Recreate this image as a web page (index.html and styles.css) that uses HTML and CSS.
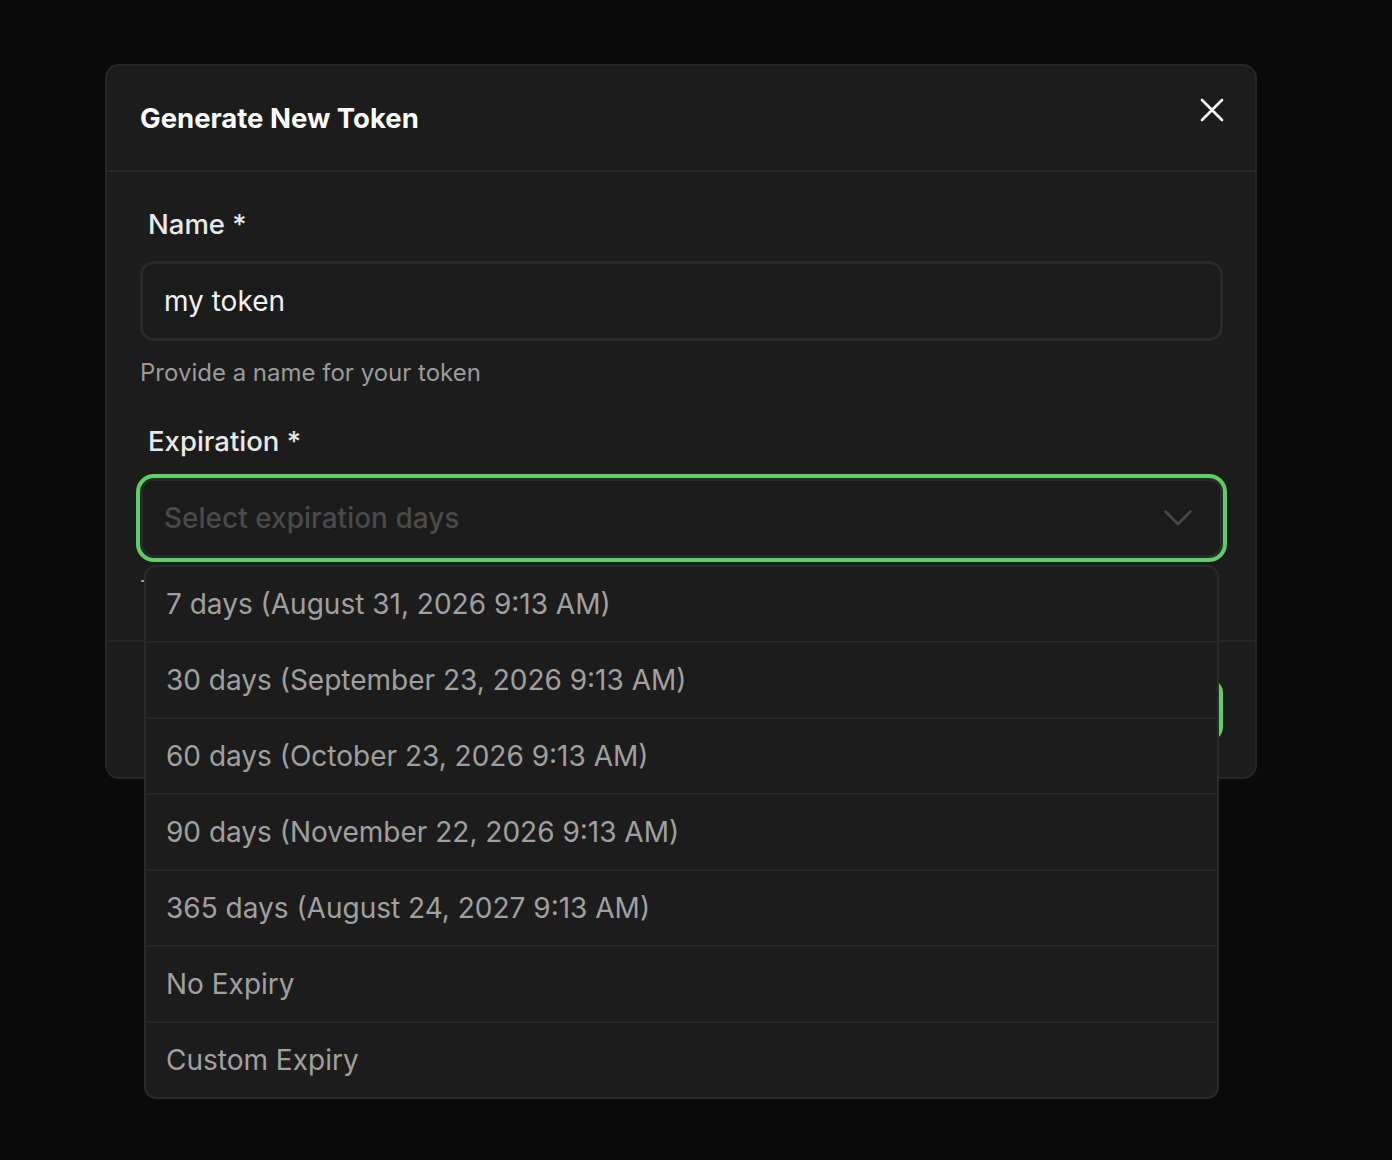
FILE: index.html
```html
<!DOCTYPE html>
<html lang="en">
<head>
<meta charset="utf-8">
<title>Generate New Token</title>
<link rel="stylesheet" href="styles.css">
</head>
<body>
<div class="page">
  <div class="modal">
    <div class="modal-header">
      <h2 class="modal-title">Generate New Token</h2>
      <button class="close-btn" aria-label="Close">
        <svg width="24" height="24" viewBox="0 0 24 24" fill="none" stroke="#ffffff" stroke-width="2.6" stroke-linecap="round"><path d="M2 2L22 22M22 2L2 22"/></svg>
      </button>
    </div>
    <div class="modal-body">
      <div class="field">
        <label class="field-label">Name *</label>
        <div class="input">my token</div>
        <p class="helper">Provide a name for your token</p>
      </div>
      <div class="field field-expiration">
        <label class="field-label">Expiration *</label>
        <div class="select-wrap">
          <div class="input select">
            <span class="placeholder">Select expiration days</span>
            <svg class="chevron" width="28" height="16" viewBox="0 0 28 16" fill="none" stroke="#474747" stroke-width="2.6" stroke-linecap="round" stroke-linejoin="round"><path d="M1.5 1.5L14 14L26.5 1.5"/></svg>
          </div>
          <ul class="dropdown">
            <li class="option">7 days (August 31, 2026 9:13 AM)</li>
            <li class="option">30 days (September 23, 2026 9:13 AM)</li>
            <li class="option">60 days (October 23, 2026 9:13 AM)</li>
            <li class="option">90 days (November 22, 2026 9:13 AM)</li>
            <li class="option">365 days (August 24, 2027 9:13 AM)</li>
            <li class="option">No Expiry</li>
            <li class="option">Custom Expiry</li>
          </ul>
        </div>
        <p class="helper">The token will expire after the selected period</p>
      </div>
    </div>
    <div class="modal-footer">
      <button class="btn-primary">Generate Token</button>
    </div>
  </div>
</div>
</body>
</html>
```
FILE: styles.css
```css
* { box-sizing: border-box; }
html, body {
  margin: 0;
  padding: 0;
  background: #0a0a0a;
  font-family: Inter, "Noto Sans", sans-serif;
}
.page {
  padding: 64px 0 0 105px;
  min-height: 1160px;
}
.modal {
  width: 1152px;
  background: #1c1c1c;
  border: 2px solid #262626;
  border-radius: 14px;
}
.modal-header {
  display: flex;
  align-items: center;
  justify-content: space-between;
  height: 106px;
  padding: 0 31px 0 33px;
  border-bottom: 2px solid #282828;
}
.modal-title {
  margin: 0;
  font-size: 27.5px;
  font-weight: 700;
  color: #ffffff;
  letter-spacing: 0;
}
.close-btn {
  background: none;
  border: none;
  padding: 0;
  width: 24px;
  height: 24px;
  margin-bottom: 16px;
  display: flex;
}
.modal-body {
  padding: 34px 32px 0 33px;
}
.field {
  display: flex;
  flex-direction: column;
}
.field-expiration {
  margin-top: 34px;
}
.field-label {
  font-size: 27.5px;
  line-height: 36px;
  font-weight: 500;
  color: #e8e9ec;
  padding-left: 8px;
  margin-bottom: 19px;
}
.input {
  height: 80px;
  border: 3px solid #2a2a2a;
  border-radius: 14px;
  background: #1b1b1b;
  display: flex;
  align-items: center;
  padding: 0 21px;
  font-size: 28px;
  color: #f0f1f3;
}
.helper {
  margin: 16px 0 0 0;
  font-size: 24px;
  line-height: 32px;
  color: #9b9b9b;
}
.select-wrap {
  position: relative;
}
.select {
  justify-content: space-between;
  box-shadow: 0 0 0 4px #5ccf66;
  padding-right: 28px;
}
.placeholder {
  color: #4a4a4a;
  font-weight: 500;
}
.chevron {
  display: block;
}
.dropdown {
  position: absolute;
  z-index: 10;
  top: calc(100% + 7px);
  left: 4px;
  right: 4px;
  margin: 0;
  padding: 0;
  list-style: none;
  background: #1c1c1c;
  border: 2px solid #2a2a2a;
  border-radius: 12px;
  overflow: hidden;
}
.option {
  height: 76px;
  display: flex;
  align-items: center;
  padding: 0 20px 0 20px;
  font-size: 28px;
  color: #a0a0a0;
  border-top: 2px solid #262626;
}
.option:first-child {
  border-top: none;
  height: 74px;
}
.modal-footer {
  margin-top: 34px;
  border-top: 2px solid #262626;
  display: flex;
  justify-content: flex-end;
  padding: 37px 32px 36px 32px;
}
.btn-primary {
  height: 62px;
  padding: 0 32px;
  border: none;
  border-radius: 14px;
  background: #5ccf66;
  color: #0a0a0a;
  font-family: Inter, "Noto Sans", sans-serif;
  font-size: 24px;
  font-weight: 600;
}
```
